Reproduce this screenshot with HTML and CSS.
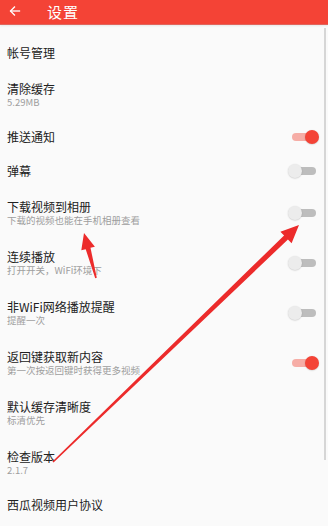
FILE: index.html
```html
<!DOCTYPE html>
<html lang="zh-CN">
<head>
    <meta charset="utf-8">
    <title>设置</title>
    <link rel="stylesheet" href="styles.css">
</head>
<body>
    <div class="screen">
        <header class="app-bar">
            <svg class="back-icon" width="12" height="12" viewBox="0 0 24 24" fill="none" stroke="currentColor" stroke-width="2.6" stroke-linecap="square">
                <line x1="21" y1="12" x2="4" y2="12"></line>
                <polyline points="11 4 3 12 11 20" stroke-linejoin="miter"></polyline>
            </svg>
            <h1>设置</h1>
        </header>

        <main class="settings">
            <div class="row">
                <div class="label"><span class="title">帐号管理</span></div>
            </div>
            <div class="row double">
                <div class="label">
                    <span class="title">清除缓存</span>
                    <span class="sub">5.29MB</span>
                </div>
            </div>
            <div class="row">
                <div class="label"><span class="title">推送通知</span></div>
                <span class="switch on"></span>
            </div>
            <div class="row">
                <div class="label"><span class="title">弹幕</span></div>
                <span class="switch"></span>
            </div>
            <div class="row double">
                <div class="label">
                    <span class="title">下载视频到相册</span>
                    <span class="sub">下载的视频也能在手机相册查看</span>
                </div>
                <span class="switch"></span>
            </div>
            <div class="row double">
                <div class="label">
                    <span class="title">连续播放</span>
                    <span class="sub">打开开关，WiFi环境下</span>
                </div>
                <span class="switch"></span>
            </div>
            <div class="row double">
                <div class="label">
                    <span class="title">非WiFi网络播放提醒</span>
                    <span class="sub">提醒一次</span>
                </div>
                <span class="switch"></span>
            </div>
            <div class="row double">
                <div class="label">
                    <span class="title">返回键获取新内容</span>
                    <span class="sub">第一次按返回键时获得更多视频</span>
                </div>
                <span class="switch on"></span>
            </div>
            <div class="row double">
                <div class="label">
                    <span class="title">默认缓存清晰度</span>
                    <span class="sub">标清优先</span>
                </div>
            </div>
            <div class="row double">
                <div class="label">
                    <span class="title">检查版本</span>
                    <span class="sub">2.1.7</span>
                </div>
            </div>
            <div class="row">
                <div class="label"><span class="title">西瓜视频用户协议</span></div>
            </div>
        </main>

        <div class="scrollbar"></div>

        <!-- annotation arrows drawn over the screenshot -->
        <svg class="marks" width="328" height="526" viewBox="0 0 328 526">
            <polygon points="95.2,278.2 85.7,249.15 81.3,250.3 84,233 94.9,246.7 90.5,247.85 96.8,277.8"></polygon>
            <polygon points="52.45,461.42 284.06,235.5 280.4,231.7 299,225 291.6,243.3 287.94,239.5 53.55,462.58"></polygon>
        </svg>
    </div>
</body>
</html>
```

FILE: styles.css
```css
:root {
    --red: #F44336;
    --red-light: #F6ADA6;
    --bg: #FAFAFA;
    --text: #212121;
    --text-secondary: #9E9E9E;
    --switch-off: #BDBDBD;
    --thumb-off: #ECECEC;
}

* {
    box-sizing: border-box;
    margin: 0;
    padding: 0;
}

body {
    font-family: "Noto Sans CJK SC", "Noto Sans", sans-serif;
    background: var(--bg);
    color: var(--text);
}

.screen {
    position: relative;
    width: 328px;
    height: 526px;
    overflow: hidden;
}

.app-bar {
    height: 25px;
    background: var(--red);
    color: #fff;
    display: flex;
    align-items: center;
    padding: 0 0 2px 9px;
    border-bottom: 1px solid #E0655C;
    box-shadow: 0 1px 2px rgba(0, 0, 0, 0.08);
}

.back-icon {
    display: block;
}

.app-bar h1 {
    font-size: 15px;
    font-weight: 400;
    margin-left: 26px;
    letter-spacing: 1px;
}

.settings {
    padding-top: 11px;
}

.row {
    height: 34px;
    display: flex;
    align-items: center;
    justify-content: space-between;
    padding: 0 9px 0 7px;
}

.row.double {
    height: 50px;
}

.label {
    display: flex;
    flex-direction: column;
}

.title {
    font-size: 12px;
    line-height: 14px;
}

.sub {
    font-size: 9.5px;
    line-height: 12px;
    color: var(--text-secondary);
}

.switch {
    position: relative;
    width: 31px;
    height: 14px;
}

.switch::before {
    content: "";
    position: absolute;
    left: 4px;
    right: 3px;
    top: 3px;
    height: 8px;
    border-radius: 4px;
    background: var(--switch-off);
}

.switch::after {
    content: "";
    position: absolute;
    left: 0;
    top: 0;
    width: 14px;
    height: 14px;
    border-radius: 50%;
    background: var(--thumb-off);
    box-shadow: 0 0.5px 1.5px rgba(0, 0, 0, 0.2);
}

.switch.on::before {
    background: var(--red-light);
}

.switch.on::after {
    left: auto;
    right: 0;
    background: var(--red);
}

.scrollbar {
    position: absolute;
    right: 2px;
    top: 28px;
    width: 2px;
    height: 432px;
    background: #D6D6D6;
}

.marks {
    position: absolute;
    left: 0;
    top: 0;
    pointer-events: none;
}

.marks polygon {
    fill: #EC2B2B;
}
```
